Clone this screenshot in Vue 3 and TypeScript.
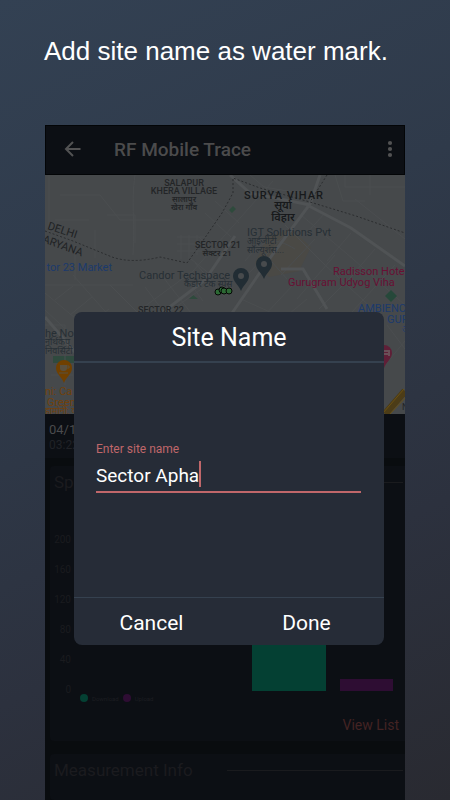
<script setup lang="ts">
import { ref } from 'vue'

interface Bar {
  name: string
  value: number
}

interface Dot {
  x: number
  y: number
}

const siteName = ref<string>('Sector Apha')
const open = ref<boolean>(true)

const ticks: number[] = [200, 160, 120, 80, 40, 0]
const bars: Bar[] = [
  { name: 'download', value: 120 },
  { name: 'upload', value: 16 },
]
const trace: Dot[] = [
  { x: 173, y: 117 },
  { x: 177, y: 115 },
  { x: 179, y: 116 },
  { x: 184, y: 116 },
]

const barHeight = (value: number): string => `${(value / 200) * 150}px`

function close(): void {
  open.value = false
}
</script>

<template>
  <div class="page">
    <h1 class="headline">Add site name as water mark.</h1>

    <div class="phone">
      <header class="appbar">
        <button class="icon-button" type="button" aria-label="Back">
          <svg width="18" height="18" viewBox="0 0 18 18" fill="none" stroke="currentColor" stroke-width="2">
            <path d="M16.5 9H2.5M9 2 2 9l7 7" />
          </svg>
        </button>
        <h2 class="app-title">RF Mobile Trace</h2>
        <button class="icon-button" type="button" aria-label="More options">
          <svg width="6" height="18" viewBox="0 0 6 18" fill="currentColor">
            <circle cx="3" cy="3" r="2.1" />
            <circle cx="3" cy="9" r="2.1" />
            <circle cx="3" cy="15" r="2.1" />
          </svg>
        </button>
      </header>

      <svg class="map" viewBox="0 0 360 239" preserveAspectRatio="xMidYMid slice" role="img" aria-label="Map">
        <rect width="360" height="239" fill="#46494b" />
        <path d="M222 62l24-8 20 18-12 24-30 6-14-14z" fill="#4a4945" />
        <path d="M8 181h24v7H8z" fill="#2f4a3e" />
        <path d="M144 124l4-4 5 4zM184 35l4-4 3 3-4 4z" fill="#2e4a3c" />
        <g class="minor-roads">
          <path d="M4 0v58M90 0c-4 30 0 40-2 80M15 20h40l20 25h50M50 55v28M62 40h28v28M10 45h34M30 70v35" />
          <path d="M0 118l60 50M0 135l70 65M28 100l60 68M0 110h88M65 110l40 40M88 140l60-44 80-90M105 150l60-42" />
          <path d="M132 62h30M132 69h28M132 76h25M136 60v24M144 60v24M152 60v20M160 38l26 24M170 26l24 22M154 62l22 20M146 84l20 16" />
          <path d="M100 112l30 40M118 102l28 36M136 96l22 30M150 88l30 34M10 125l18-14M25 140l22-18M40 154l24-20" />
          <path d="M205 0l14 12 35 6M290 0l8 26h22M300 0v12h60M325 0v20M240 50l40 40 50 46M256 40l52 44 52 46M270 64l-34 36M290 80l-38 44M310 98l-36 36M330 112l-24 26" />
          <path d="M200 86c20-24 30-24 50-12M212 70l30 34M204 98l36-38M196 124l40 18M248 110l-30 32M262 124l-24 20M280 38l-20 22M306 58l-24 28M330 74l-26 30M350 90l-22 24" />
          <path d="M340 190l20-24M342 150l18 24M310 24l50 40M0 150h20v60M6 200h22" />
        </g>
        <g class="roads">
          <path d="M185 141l40-58 40-54 10-29" />
          <path d="M264 31l42 22 54 38" />
          <path d="M105 147l55-42 30-44M185 0l20 18 60 12M236 94h22l24 40" />
          <path d="M0 142l34 40" />
        </g>
        <path d="M340 239l20-23" stroke="#4c3c17" stroke-width="7" />
        <path d="M338 238l21-24M344 240l17-18" stroke="#6a5114" stroke-width="1" />
        <g class="border-lines">
          <path d="M0 56l28 10 39 16q20 7 48 0l27 6 13-18 22-32 11-20V3l27 10 50 14 46 14 49 17" />
          <path d="M282 0l-17 27" />
        </g>
        <path d="M346 115l6 6-6 6-6-6z" fill="#26483a" />

        <g class="area" text-anchor="middle">
          <text x="139" y="11">SALAPUR</text>
          <text x="139" y="19">KHERA VILLAGE</text>
          <text x="173" y="73">SECTOR 21</text>
          <text x="116" y="138">SECTOR 22</text>
        </g>
        <g class="area-local" text-anchor="middle">
          <text x="139" y="27">सालापुर</text>
          <text x="139" y="35">खेरा गाँव</text>
          <text x="172" y="81">सेक्टर 21</text>
        </g>
        <g class="region">
          <text transform="translate(2 54) rotate(18)">DELHI</text>
          <text transform="translate(-3 67) rotate(20)">ARYANA</text>
        </g>
        <text class="district" x="239" y="24" text-anchor="middle">SURYA VIHAR</text>
        <g class="district-local" text-anchor="middle">
          <text x="238" y="34">सूर्या</text>
          <text x="238" y="46">विहार</text>
        </g>
        <g class="place shop">
          <text x="67" y="96" text-anchor="end">tor 23 Market</text>
          <text x="313" y="137">AMBIENC</text>
          <text x="342" y="148">GUR</text>
          <text class="place-local" x="357" y="157">अ</text>
        </g>
        <g class="place office">
          <text x="94" y="104">Candor Techspace</text>
          <text x="202" y="61">IGT Solutions Pvt</text>
          <text x="0" y="162">he No</text>
        </g>
        <g class="place-local office">
          <text x="139" y="112">कैंडौर टेक स्पेस</text>
          <text x="202" y="69">आईजीटी</text>
          <text x="202" y="78">सॉल्यूशंस...</text>
          <text x="0" y="170">नॉर्थकैप</text>
          <text x="0" y="179">निवर्सिटी</text>
        </g>
        <g class="place hotel">
          <text x="288" y="100">Radisson Hote</text>
          <text x="243" y="111">Gurugram Udyog Viha</text>
        </g>
        <g class="place cafe">
          <text x="0" y="220">ni: Ca</text>
          <text x="2" y="231">Green</text>
        </g>
        <text class="place-local cafe" x="0" y="239">हामोनी: के</text>
        <text class="place-local" x="357" y="235" fill="#222426">N</text>

        <g fill="#222d34">
          <path d="M219 104c-2-6-8-9-8-15a8 8 0 0 1 16 0c0 6-6 9-8 15z" />
          <path d="M196 116c-2-6-8-9-8-15a8 8 0 0 1 16 0c0 6-6 9-8 15z" />
        </g>
        <g fill="#484b4d">
          <circle cx="219" cy="89" r="3" />
          <circle cx="196" cy="101" r="3" />
        </g>
        <path d="M19 208c-2-6-8-9-8-15a8 8 0 0 1 16 0c0 6-6 9-8 15z" fill="#704000" />
        <path d="M15 190h7v3q0 3-3 3h-1q-3 0-3-3z" fill="#59503f" />
        <path d="M22 191h2v2h-2M14 198h9" fill="none" stroke="#59503f" stroke-width="1" />
        <path d="M339 193c-2-6-8-9-8-15a8 8 0 0 1 16 0c0 6-6 9-8 15z" fill="#5f1f37" />
        <path d="M335 175v6M335 179h9v2M338 178v-2h6v2" fill="none" stroke="#6a5058" stroke-width="2" />
        <circle v-for="(dot, i) in trace" :key="i" class="trace" :cx="dot.x" :cy="dot.y" r="3" />
      </svg>

      <section class="stamp">
        <p class="date">04/1</p>
        <p class="time">03:22</p>
      </section>

      <section class="card">
        <div class="card-head">
          <h3>Sp</h3>
          <span class="rule"></span>
        </div>
        <div class="chart">
          <div class="axis">
            <span v-for="tick in ticks" :key="tick">{{ tick }}</span>
          </div>
          <div class="plot">
            <div
              v-for="bar in bars"
              :key="bar.name"
              class="bar"
              :class="bar.name"
              :style="{ height: barHeight(bar.value) }"
            ></div>
          </div>
        </div>
        <div class="legend">
          <span class="swatch download"></span>Download
          <span class="swatch upload"></span>Upload
        </div>
        <a class="view-list" href="#list">View List</a>
      </section>

      <section class="card last">
        <div class="card-head">
          <h3>Measurement Info</h3>
          <span class="rule"></span>
        </div>
      </section>

      <div v-if="open" class="overlay">
        <form class="dialog" role="dialog" aria-labelledby="dialog-title" @submit.prevent="close">
          <h2 id="dialog-title" class="dialog-title">Site Name</h2>
          <div class="dialog-body">
            <label for="site-name">Enter site name</label>
            <div class="field">
              <input id="site-name" v-model="siteName" type="text" autocomplete="off" spellcheck="false" />
              <span class="caret"></span>
            </div>
          </div>
          <div class="actions">
            <button type="button" @click="close">Cancel</button>
            <button type="submit">Done</button>
          </div>
        </form>
      </div>
    </div>
  </div>
</template>

<style>
body {
  margin: 0;
  background: #2b303c;
}
</style>

<style scoped>
.page {
  box-sizing: border-box;
  display: flex;
  flex-direction: column;
  min-height: 100vh;
  background: linear-gradient(155deg, #334153 0%, #2f3a4a 35%, #2c313e 70%, #292a31 100%);
  font-family: Roboto, "Noto Sans", sans-serif;
}

h1, h2, h3, p {
  margin: 0;
  font-weight: 400;
}

button {
  padding: 0;
  border: 0;
  background: none;
  font-family: inherit;
  color: inherit;
}

.headline {
  box-sizing: border-box;
  height: 125px;
  padding: 35px 24px 0 44px;
  font-family: "Liberation Sans", Arial, sans-serif;
  font-size: 26px;
  line-height: 32px;
  color: #fff;
}

.phone {
  position: relative;
  display: flex;
  flex: 1;
  flex-direction: column;
  margin: 0 10%;
  background: #090c0f;
  overflow: hidden;
}

.appbar {
  box-sizing: border-box;
  display: flex;
  align-items: center;
  height: 50px;
  padding: 0 11px 2px 18px;
  border: 1px solid #030507;
  background: #0c0f14;
  color: #525253;
}

.icon-button {
  display: flex;
}

.app-title {
  flex: 1;
  padding: 2px 0 0 32px;
  font-size: 19px;
  font-weight: 500;
  line-height: 24px;
  color: #4b4b4c;
}

.map {
  display: block;
  width: 100%;
}

.map path {
  fill-rule: evenodd;
}

.minor-roads, .roads, .border-lines {
  fill: none;
}

.minor-roads {
  stroke: #4b4e50;
  stroke-width: 1;
}

.roads {
  stroke: #505355;
  stroke-width: 3;
}

.border-lines {
  stroke: #2b2d2f;
  stroke-width: 1;
  stroke-dasharray: 2 2;
}

.area {
  font-size: 9px;
  font-weight: 500;
  fill: #232527;
}

.area-local {
  font-size: 8px;
  font-weight: 600;
  fill: #232527;
}

.region {
  font-size: 11px;
  fill: #202224;
}

.district {
  font-size: 11px;
  font-weight: 500;
  letter-spacing: 1px;
  fill: #17191b;
}

.district-local {
  font-size: 11px;
  font-weight: 600;
  fill: #17191b;
}

.place {
  font-size: 11px;
}

.place-local {
  font-size: 9px;
}

.shop {
  fill: #1c3a6b;
}

.office {
  fill: #272f35;
}

.hotel {
  fill: #681034;
}

.cafe {
  fill: #71410c;
}

.trace {
  fill: #2c6934;
  stroke: #050805;
  stroke-width: 1;
}

.stamp {
  padding: 8px 4px 6px;
  background: #0c0f14;
}

.date {
  font-size: 13px;
  line-height: 16px;
  color: #4a4b4d;
}

.time {
  font-size: 12px;
  line-height: 14px;
  color: #202227;
}

.card {
  display: flex;
  flex-direction: column;
  margin: 8px 0 0 5px;
  padding-bottom: 7px;
  border-radius: 4px 0 0 4px;
  background: #0c0f14;
}

.card.last {
  flex: 1;
  margin-top: 13px;
  padding-bottom: 0;
}

.card-head {
  display: flex;
  align-items: center;
  gap: 34px;
  height: 32px;
  padding: 0 2px 0 4px;
}

.card-head h3 {
  font-size: 17px;
  line-height: 24px;
  color: #1b1b1f;
}

.rule {
  flex: 1;
  height: 1px;
  background: #1a1b1e;
}

.chart {
  display: flex;
  gap: 8px;
  height: 158px;
  margin-top: 38px;
  padding-right: 12px;
}

.axis {
  display: flex;
  flex-direction: column;
  justify-content: space-between;
  width: 21px;
  font-size: 10px;
  line-height: 8px;
  text-align: right;
  color: #1a1b1f;
}

.plot {
  display: flex;
  flex: 1;
  align-items: flex-end;
  justify-content: flex-end;
  gap: 14px;
  padding-bottom: 3px;
}

.download {
  background: #044033;
}

.upload {
  background: #2e0d33;
}

.bar.download {
  width: 74px;
}

.bar.upload {
  width: 53px;
}

.legend {
  display: flex;
  align-items: center;
  gap: 4px;
  height: 8px;
  padding-left: 30px;
  font-size: 6px;
  color: #1d1e22;
}

.swatch {
  width: 8px;
  height: 8px;
  border-radius: 50%;
}

.view-list {
  align-self: flex-end;
  margin-top: 14px;
  padding-right: 6px;
  font-size: 14px;
  line-height: 18px;
  color: #432323;
  text-decoration: none;
}

.overlay {
  position: absolute;
  inset: 0;
  padding: 187px 21px 0 29px;
}

.dialog {
  border-radius: 8px;
  background: #262c37;
  color: #fff;
}

.dialog-title {
  height: 49px;
  border-bottom: 2px solid #35414f;
  font-size: 25px;
  line-height: 52px;
  text-align: center;
}

.dialog-body {
  display: flex;
  flex-direction: column;
  height: 156px;
  padding: 78px 23px 0 22px;
}

.dialog-body label {
  font-size: 12px;
  line-height: 16px;
  color: #c0676a;
}

.field {
  display: flex;
  align-items: center;
  height: 34px;
  border-bottom: 2px solid #c0676a;
}

.field input {
  field-sizing: content;
  padding: 4px 0 0;
  border: 0;
  outline: 0;
  background: none;
  font-family: inherit;
  font-size: 19px;
  line-height: 26px;
  color: #fff;
  caret-color: transparent;
}

.caret {
  width: 2px;
  height: 26px;
  background: #c0676a;
}

.actions {
  display: grid;
  grid-template-columns: 1fr 1fr;
  height: 47px;
  border-top: 1px solid #35414f;
}

.actions button {
  padding-top: 2px;
  font-size: 21px;
  line-height: 26px;
}
</style>
